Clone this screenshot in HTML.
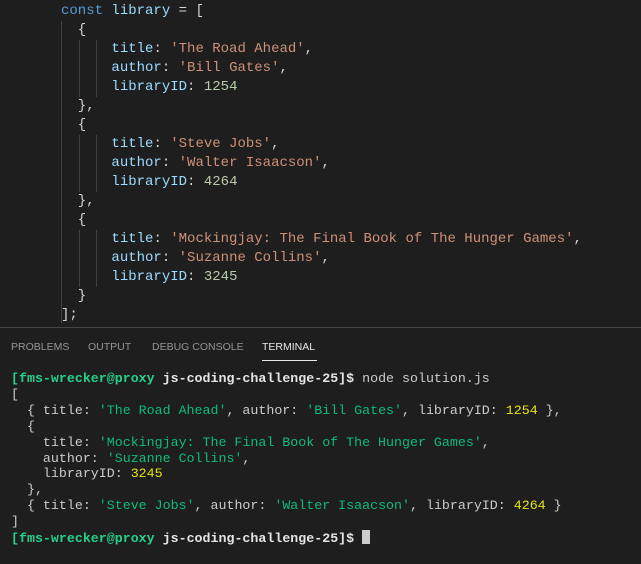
<!DOCTYPE html>
<html><head><style>
body{margin:0;width:641px;height:564px;background:#1e1e1e;overflow:hidden;position:relative;font-family:"Liberation Mono","DejaVu Sans Mono",monospace}
.ed{position:absolute;left:61px;top:2px;font-size:14px;line-height:19px;white-space:pre;color:#d4d4d4}
.k{color:#569cd6}.p{color:#9cdcfe}.s{color:#ce9178}.n{color:#b5cea8}
.g{position:absolute;width:1px;background:#404040}
.sep{position:absolute;left:0;top:327px;width:641px;height:1px;background:#444}
.tabs{position:absolute;top:341px;left:11px;font-family:"Liberation Sans",sans-serif;font-size:10.5px;color:#969696}
.tabs span{position:absolute;white-space:nowrap}
.ul{position:absolute;left:262px;top:360px;width:55px;height:1px;background:#e7e7e7}
.t{position:absolute;left:11px;top:371px;font-size:13.3px;line-height:15.9px;white-space:pre;color:#cccccc}
.gr{color:#23d18b;font-weight:bold}.b{color:#e5e5e5;font-weight:bold}.ts{color:#0dbc79}.y{color:#e5e510}
.cur{display:inline-block;width:8px;height:14px;background:#cccccc;vertical-align:-2px}
</style></head><body>
<div class="g" style="left:61px;top:21px;height:302px"></div>
<div class="g" style="left:79px;top:40px;height:57px"></div>
<div class="g" style="left:96px;top:40px;height:57px"></div>
<div class="g" style="left:79px;top:135px;height:57px"></div>
<div class="g" style="left:96px;top:135px;height:57px"></div>
<div class="g" style="left:79px;top:230px;height:57px"></div>
<div class="g" style="left:96px;top:230px;height:57px"></div>
<div class="ed"><span class="k">const</span> <span class="p">library</span> = [
  {
      <span class="p">title</span>: <span class="s">'The Road Ahead'</span>,
      <span class="p">author</span>: <span class="s">'Bill Gates'</span>,
      <span class="p">libraryID</span>: <span class="n">1254</span>
  },
  {
      <span class="p">title</span>: <span class="s">'Steve Jobs'</span>,
      <span class="p">author</span>: <span class="s">'Walter Isaacson'</span>,
      <span class="p">libraryID</span>: <span class="n">4264</span>
  },
  {
      <span class="p">title</span>: <span class="s">'Mockingjay: The Final Book of The Hunger Games'</span>,
      <span class="p">author</span>: <span class="s">'Suzanne Collins'</span>,
      <span class="p">libraryID</span>: <span class="n">3245</span>
  }
];</div>
<div class="sep"></div>
<div class="tabs"><span style="left:0">PROBLEMS</span><span style="left:77px">OUTPUT</span><span style="left:141px">DEBUG CONSOLE</span><span style="left:251px;color:#e7e7e7">TERMINAL</span></div>
<div class="ul"></div>
<div class="t"><span class="gr">[fms-wrecker@proxy</span> <span class="b">js-coding-challenge-25]$</span> node solution.js
[
  { title: <span class="ts">'The Road Ahead'</span>, author: <span class="ts">'Bill Gates'</span>, libraryID: <span class="y">1254</span> },
  {
    title: <span class="ts">'Mockingjay: The Final Book of The Hunger Games'</span>,
    author: <span class="ts">'Suzanne Collins'</span>,
    libraryID: <span class="y">3245</span>
  },
  { title: <span class="ts">'Steve Jobs'</span>, author: <span class="ts">'Walter Isaacson'</span>, libraryID: <span class="y">4264</span> }
]
<span class="gr">[fms-wrecker@proxy</span> <span class="b">js-coding-challenge-25]$</span> <span class="cur"></span></div>
</body></html>
